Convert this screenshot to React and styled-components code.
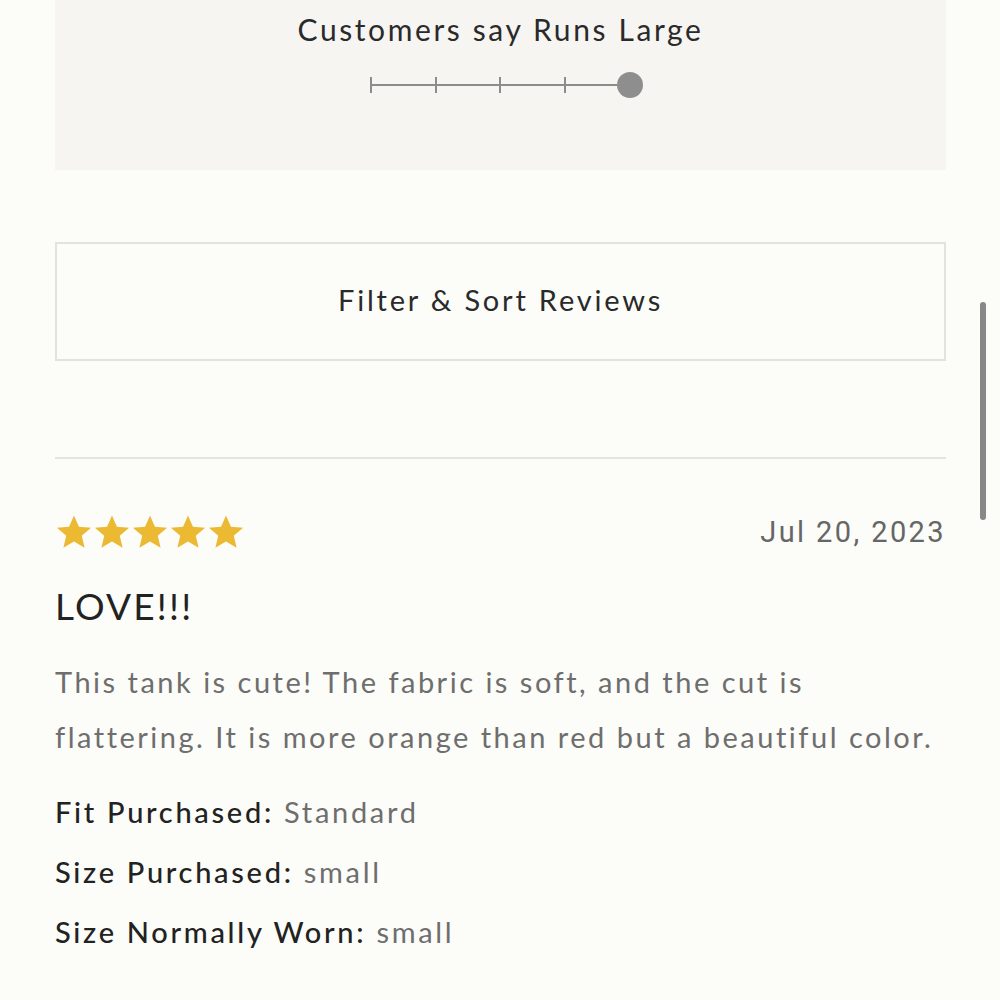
import React from "react";
import styled, { createGlobalStyle } from "styled-components";

const GlobalStyle = createGlobalStyle`
  html, body {
    margin: 0;
    padding: 0;
    background: #fcfcf8;
  }
  body {
    font-family: "Lato", "Noto Sans", sans-serif;
    color: #222;
  }
`;

const App = () => {
  const ticks = [0, 1, 2, 3];
  const details = [
    { label: "Fit Purchased:", value: "Standard" },
    { label: "Size Purchased:", value: "small" },
    { label: "Size Normally Worn:", value: "small" },
  ];

  return (
    <Page>
      <GlobalStyle />
      <FitPanel>
        <FitTitle>Customers say Runs Large</FitTitle>
        <Scale>
          {ticks.map((t) => (
            <Tick key={t} style={{ left: `${t * 64.7}px` }} />
          ))}
          <Knob />
        </Scale>
      </FitPanel>

      <FilterButton>Filter &amp; Sort Reviews</FilterButton>

      <Divider />

      <Review>
        <ReviewHead>
          <Stars>
            {[0, 1, 2, 3, 4].map((i) => (
              <Star key={i} viewBox="0 0 24 24">
                <path d="M12 1.6l3.1 7.1 7.7.6-5.9 5.1 1.8 7.6L12 18l-6.7 4 1.8-7.6-5.9-5.1 7.7-.6z" />
              </Star>
            ))}
          </Stars>
          <DateText>Jul 20, 2023</DateText>
        </ReviewHead>
        <ReviewTitle>LOVE!!!</ReviewTitle>
        <Body>
          This tank is cute! The fabric is soft, and the cut is flattering. It
          is more orange than red but a beautiful color.
        </Body>
        <Details>
          {details.map((d) => (
            <DetailRow key={d.label}>
              <Label>{d.label}</Label> <Value>{d.value}</Value>
            </DetailRow>
          ))}
        </Details>
      </Review>

      <ScrollThumb />
    </Page>
  );
};

export default App;

const Page = styled.div`
  position: relative;
  width: 1000px;
  height: 1000px;
  overflow: hidden;
  padding: 0 54px 0 55px;
  box-sizing: border-box;
  display: flex;
  flex-direction: column;
`;

const FitPanel = styled.div`
  background: #f6f5f2;
  height: 170px;
  display: flex;
  flex-direction: column;
  align-items: center;
  padding-top: 10px;
  box-sizing: border-box;
`;

const FitTitle = styled.div`
  font-size: 30px;
  letter-spacing: 2.6px;
  color: #2a2a2a;
  line-height: 38px;
`;

const Scale = styled.div`
  position: relative;
  width: 259px;
  height: 26px;
  margin-top: 24px;

  &::before {
    content: "";
    position: absolute;
    left: 0;
    right: 0;
    top: 12px;
    height: 2px;
    background: #8c8c8c;
  }
`;

const Tick = styled.span`
  position: absolute;
  top: 5px;
  width: 2px;
  height: 16px;
  margin-left: -1px;
  background: #8c8c8c;
`;

const Knob = styled.span`
  position: absolute;
  right: -13px;
  top: 0;
  width: 26px;
  height: 26px;
  border-radius: 50%;
  background: #8e8e8e;
`;

const FilterButton = styled.button`
  margin-top: 72px;
  height: 119px;
  width: 100%;
  padding: 0 0 4px;
  background: transparent;
  border: 2px solid #e2e2de;
  font-family: "Lato", "Noto Sans", sans-serif;
  font-size: 29px;
  letter-spacing: 2.8px;
  color: #2a2a2a;
  cursor: pointer;
`;

const Divider = styled.hr`
  margin: 96px 0 0;
  border: none;
  height: 2px;
  background: #e4e4e0;
`;

const Review = styled.div`
  display: flex;
  flex-direction: column;
  padding-top: 51px;
`;

const ReviewHead = styled.div`
  display: flex;
  justify-content: space-between;
  align-items: center;
  height: 44px;
`;

const Stars = styled.div`
  display: flex;
`;

const Star = styled.svg`
  width: 38px;
  height: 38px;
  fill: #ecb932;
`;

const DateText = styled.div`
  font-family: "Roboto", "Liberation Sans", sans-serif;
  font-size: 29px;
  letter-spacing: 2.4px;
  color: #666;
`;

const ReviewTitle = styled.h2`
  margin: 30px 0 0;
  font-size: 37px;
  font-weight: 400;
  letter-spacing: 2.2px;
  color: #222;
  line-height: 44px;
`;

const Body = styled.p`
  margin: 26px 0 0;
  font-size: 29px;
  line-height: 55px;
  letter-spacing: 2.5px;
  color: #6e6e6e;
`;

const Details = styled.div`
  display: flex;
  flex-direction: column;
  margin-top: 18px;
`;

const DetailRow = styled.div`
  font-size: 29px;
  line-height: 60px;
  letter-spacing: 2.7px;
`;

const Label = styled.span`
  color: #222;
  font-weight: 500;
`;

const Value = styled.span`
  color: #6e6e6e;
`;

const ScrollThumb = styled.div`
  position: absolute;
  right: 14px;
  top: 302px;
  width: 6px;
  height: 218px;
  border-radius: 3px;
  background: #888;
`;
